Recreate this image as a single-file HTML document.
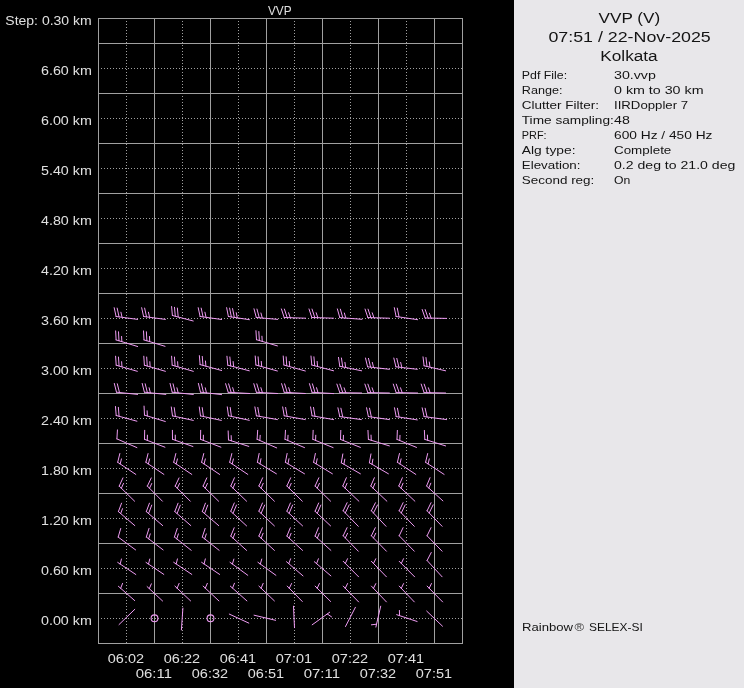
<!DOCTYPE html><html><head><meta charset="utf-8"><style>html,body{margin:0;padding:0;background:#000;width:744px;height:688px;overflow:hidden}</style></head><body><svg width="744" height="688" viewBox="0 0 744 688" style="display:block"><rect x="0" y="0" width="744" height="688" fill="#000"/><g stroke="#a0a0a0" stroke-width="1" shape-rendering="crispEdges"><line x1="98" y1="43.5" x2="463" y2="43.5"/><line x1="98" y1="93.5" x2="463" y2="93.5"/><line x1="98" y1="143.5" x2="463" y2="143.5"/><line x1="98" y1="193.5" x2="463" y2="193.5"/><line x1="98" y1="243.5" x2="463" y2="243.5"/><line x1="98" y1="293.5" x2="463" y2="293.5"/><line x1="98" y1="343.5" x2="463" y2="343.5"/><line x1="98" y1="393.5" x2="463" y2="393.5"/><line x1="98" y1="443.5" x2="463" y2="443.5"/><line x1="98" y1="493.5" x2="463" y2="493.5"/><line x1="98" y1="543.5" x2="463" y2="543.5"/><line x1="98" y1="593.5" x2="463" y2="593.5"/><line x1="154.5" y1="18" x2="154.5" y2="644"/><line x1="210.5" y1="18" x2="210.5" y2="644"/><line x1="266.5" y1="18" x2="266.5" y2="644"/><line x1="322.5" y1="18" x2="322.5" y2="644"/><line x1="378.5" y1="18" x2="378.5" y2="644"/><line x1="434.5" y1="18" x2="434.5" y2="644"/><rect x="98.5" y="18.5" width="364" height="625" fill="none"/></g><g stroke="#a0a0a0" stroke-width="1" stroke-dasharray="1 2" shape-rendering="crispEdges"><line x1="101" y1="68.5" x2="462" y2="68.5"/><line x1="101" y1="118.5" x2="462" y2="118.5"/><line x1="101" y1="168.5" x2="462" y2="168.5"/><line x1="101" y1="218.5" x2="462" y2="218.5"/><line x1="101" y1="268.5" x2="462" y2="268.5"/><line x1="101" y1="318.5" x2="462" y2="318.5"/><line x1="101" y1="368.5" x2="462" y2="368.5"/><line x1="101" y1="418.5" x2="462" y2="418.5"/><line x1="101" y1="468.5" x2="462" y2="468.5"/><line x1="101" y1="518.5" x2="462" y2="518.5"/><line x1="101" y1="568.5" x2="462" y2="568.5"/><line x1="101" y1="618.5" x2="462" y2="618.5"/><line x1="126.5" y1="21" x2="126.5" y2="643"/><line x1="182.5" y1="21" x2="182.5" y2="643"/><line x1="238.5" y1="21" x2="238.5" y2="643"/><line x1="294.5" y1="21" x2="294.5" y2="643"/><line x1="350.5" y1="21" x2="350.5" y2="643"/><line x1="406.5" y1="21" x2="406.5" y2="643"/></g><g font-family="Liberation Sans, sans-serif" style="filter:grayscale(1)"><text x="5.3" y="25.3" font-size="12.5" fill="#e0e0e0" text-anchor="start" textLength="86.4" lengthAdjust="spacingAndGlyphs">Step: 0.30 km</text><text x="91.8" y="75.3" font-size="12.5" fill="#e0e0e0" text-anchor="end" textLength="50.8" lengthAdjust="spacingAndGlyphs">6.60 km</text><text x="91.8" y="125.3" font-size="12.5" fill="#e0e0e0" text-anchor="end" textLength="50.8" lengthAdjust="spacingAndGlyphs">6.00 km</text><text x="91.8" y="175.3" font-size="12.5" fill="#e0e0e0" text-anchor="end" textLength="50.8" lengthAdjust="spacingAndGlyphs">5.40 km</text><text x="91.8" y="225.3" font-size="12.5" fill="#e0e0e0" text-anchor="end" textLength="50.8" lengthAdjust="spacingAndGlyphs">4.80 km</text><text x="91.8" y="275.3" font-size="12.5" fill="#e0e0e0" text-anchor="end" textLength="50.8" lengthAdjust="spacingAndGlyphs">4.20 km</text><text x="91.8" y="325.3" font-size="12.5" fill="#e0e0e0" text-anchor="end" textLength="50.8" lengthAdjust="spacingAndGlyphs">3.60 km</text><text x="91.8" y="375.3" font-size="12.5" fill="#e0e0e0" text-anchor="end" textLength="50.8" lengthAdjust="spacingAndGlyphs">3.00 km</text><text x="91.8" y="425.3" font-size="12.5" fill="#e0e0e0" text-anchor="end" textLength="50.8" lengthAdjust="spacingAndGlyphs">2.40 km</text><text x="91.8" y="475.3" font-size="12.5" fill="#e0e0e0" text-anchor="end" textLength="50.8" lengthAdjust="spacingAndGlyphs">1.80 km</text><text x="91.8" y="525.3" font-size="12.5" fill="#e0e0e0" text-anchor="end" textLength="50.8" lengthAdjust="spacingAndGlyphs">1.20 km</text><text x="91.8" y="575.3" font-size="12.5" fill="#e0e0e0" text-anchor="end" textLength="50.8" lengthAdjust="spacingAndGlyphs">0.60 km</text><text x="91.8" y="625.3" font-size="12.5" fill="#e0e0e0" text-anchor="end" textLength="50.8" lengthAdjust="spacingAndGlyphs">0.00 km</text><text x="268" y="15" font-size="12.5" fill="#e0e0e0" text-anchor="start" textLength="23.6" lengthAdjust="spacingAndGlyphs">VVP</text><text x="107.8" y="663.2" font-size="12.5" fill="#e0e0e0" text-anchor="start" textLength="36.2" lengthAdjust="spacingAndGlyphs">06:02</text><text x="163.79999999999998" y="663.2" font-size="12.5" fill="#e0e0e0" text-anchor="start" textLength="36.2" lengthAdjust="spacingAndGlyphs">06:22</text><text x="219.79999999999998" y="663.2" font-size="12.5" fill="#e0e0e0" text-anchor="start" textLength="36.2" lengthAdjust="spacingAndGlyphs">06:41</text><text x="275.8" y="663.2" font-size="12.5" fill="#e0e0e0" text-anchor="start" textLength="36.2" lengthAdjust="spacingAndGlyphs">07:01</text><text x="331.8" y="663.2" font-size="12.5" fill="#e0e0e0" text-anchor="start" textLength="36.2" lengthAdjust="spacingAndGlyphs">07:22</text><text x="387.8" y="663.2" font-size="12.5" fill="#e0e0e0" text-anchor="start" textLength="36.2" lengthAdjust="spacingAndGlyphs">07:41</text><text x="135.79999999999998" y="678.2" font-size="12.5" fill="#e0e0e0" text-anchor="start" textLength="36.2" lengthAdjust="spacingAndGlyphs">06:11</text><text x="191.79999999999998" y="678.2" font-size="12.5" fill="#e0e0e0" text-anchor="start" textLength="36.2" lengthAdjust="spacingAndGlyphs">06:32</text><text x="247.8" y="678.2" font-size="12.5" fill="#e0e0e0" text-anchor="start" textLength="36.2" lengthAdjust="spacingAndGlyphs">06:51</text><text x="303.8" y="678.2" font-size="12.5" fill="#e0e0e0" text-anchor="start" textLength="36.2" lengthAdjust="spacingAndGlyphs">07:11</text><text x="359.8" y="678.2" font-size="12.5" fill="#e0e0e0" text-anchor="start" textLength="36.2" lengthAdjust="spacingAndGlyphs">07:32</text><text x="415.8" y="678.2" font-size="12.5" fill="#e0e0e0" text-anchor="start" textLength="36.2" lengthAdjust="spacingAndGlyphs">07:51</text></g><rect x="514" y="0" width="230" height="688" fill="#e8e7ea"/><g font-family="Liberation Sans, sans-serif" style="filter:grayscale(1)"><text x="598.6" y="22.6" font-size="15.5" fill="#141414" text-anchor="start" textLength="61.6" lengthAdjust="spacingAndGlyphs">VVP (V)</text><text x="548.4" y="41.6" font-size="15.5" fill="#141414" text-anchor="start" textLength="162.4" lengthAdjust="spacingAndGlyphs">07:51 / 22-Nov-2025</text><text x="600.3" y="60.6" font-size="15.5" fill="#141414" text-anchor="start" textLength="57.4" lengthAdjust="spacingAndGlyphs">Kolkata</text><text x="521.8" y="78.6" font-size="11.5" fill="#141414" text-anchor="start" textLength="45.3" lengthAdjust="spacingAndGlyphs">Pdf File:</text><text x="614.0" y="78.6" font-size="11.5" fill="#141414" text-anchor="start" textLength="41.89999999999998" lengthAdjust="spacingAndGlyphs">30.vvp</text><text x="521.8" y="93.6" font-size="11.5" fill="#141414" text-anchor="start" textLength="40.699999999999996" lengthAdjust="spacingAndGlyphs">Range:</text><text x="614.0" y="93.6" font-size="11.5" fill="#141414" text-anchor="start" textLength="89.5" lengthAdjust="spacingAndGlyphs">0 km to 30 km</text><text x="521.8" y="108.6" font-size="11.5" fill="#141414" text-anchor="start" textLength="77.2" lengthAdjust="spacingAndGlyphs">Clutter Filter:</text><text x="614.0" y="108.6" font-size="11.5" fill="#141414" text-anchor="start" textLength="74.10000000000002" lengthAdjust="spacingAndGlyphs">IIRDoppler 7</text><text x="521.8" y="123.6" font-size="11.5" fill="#141414" text-anchor="start" textLength="92.0" lengthAdjust="spacingAndGlyphs">Time sampling:</text><text x="614.0" y="123.6" font-size="11.5" fill="#141414" text-anchor="start" textLength="15.799999999999955" lengthAdjust="spacingAndGlyphs">48</text><text x="521.8" y="138.6" font-size="11.5" fill="#141414" text-anchor="start" textLength="24.8" lengthAdjust="spacingAndGlyphs">PRF:</text><text x="614.0" y="138.6" font-size="11.5" fill="#141414" text-anchor="start" textLength="98.5" lengthAdjust="spacingAndGlyphs">600 Hz / 450 Hz</text><text x="521.8" y="153.6" font-size="11.5" fill="#141414" text-anchor="start" textLength="53.699999999999996" lengthAdjust="spacingAndGlyphs">Alg type:</text><text x="614.0" y="153.6" font-size="11.5" fill="#141414" text-anchor="start" textLength="57.299999999999955" lengthAdjust="spacingAndGlyphs">Complete</text><text x="521.8" y="168.6" font-size="11.5" fill="#141414" text-anchor="start" textLength="58.699999999999996" lengthAdjust="spacingAndGlyphs">Elevation:</text><text x="614.0" y="168.6" font-size="11.5" fill="#141414" text-anchor="start" textLength="121.29999999999995" lengthAdjust="spacingAndGlyphs">0.2 deg to 21.0 deg</text><text x="521.8" y="183.6" font-size="11.5" fill="#141414" text-anchor="start" textLength="72.5" lengthAdjust="spacingAndGlyphs">Second reg:</text><text x="614.0" y="183.6" font-size="11.5" fill="#141414" text-anchor="start" textLength="16.299999999999955" lengthAdjust="spacingAndGlyphs">On</text><text x="522" y="630.6" font-size="11.5" fill="#141414" text-anchor="start" textLength="51.0" lengthAdjust="spacingAndGlyphs">Rainbow</text><text x="574.6" y="630.8" font-size="11.5" fill="#404040" text-anchor="start" textLength="9.6" lengthAdjust="spacingAndGlyphs">®</text><text x="589.0" y="630.6" font-size="11.5" fill="#141414" text-anchor="start" textLength="53.8" lengthAdjust="spacingAndGlyphs">SELEX-SI</text></g><path d="M116.10 316.50L137.60 319.40M116.10 316.50l-1.92 -8.79M119.07 316.90l-1.92 -8.79M122.05 317.30l-1.11 -5.08M143.60 316.50L165.40 319.40M143.60 316.50l-1.94 -8.79M146.57 316.90l-1.94 -8.79M149.55 317.29l-1.12 -5.08M172.40 315.50L193.20 321.00M172.40 315.50l-0.81 -8.96M175.30 316.27l-0.81 -8.96M178.20 317.03l-0.81 -8.96M200.10 316.50L221.60 319.50M200.10 316.50l-1.88 -8.80M203.07 316.91l-1.88 -8.80M206.04 317.33l-1.09 -5.09M228.40 316.50L249.40 319.70M228.40 316.50l-1.77 -8.82M231.37 316.95l-1.77 -8.82M234.33 317.40l-1.77 -8.82M237.30 317.86l-1.02 -5.10M256.30 317.50L277.70 319.40M256.30 317.50l-2.32 -8.70M259.29 317.77l-2.32 -8.70M262.28 318.03l-1.34 -5.02M284.20 317.50L305.60 318.20M284.20 317.50l-2.80 -8.55M287.20 317.60l-2.80 -8.55M290.20 317.70l-1.62 -4.94M311.80 317.50L333.50 318.20M311.80 317.50l-2.80 -8.55M314.80 317.60l-2.80 -8.55M317.80 317.69l-1.62 -4.94M339.80 317.60L361.90 319.30M339.80 317.60l-2.42 -8.67M342.79 317.83l-2.42 -8.67M345.78 318.06l-1.40 -5.01M367.90 317.60L389.40 318.20M367.90 317.60l-2.84 -8.54M370.90 317.68l-2.84 -8.54M373.90 317.77l-1.64 -4.93M396.10 316.50L417.60 319.70M396.10 316.50l-1.80 -8.82M399.07 316.94l-1.80 -8.82M425.10 318.00L446.60 318.40M425.10 318.00l-2.92 -8.51M428.10 318.06l-2.92 -8.51M431.10 318.11l-1.69 -4.92M116.10 339.90L137.60 346.50M116.10 339.90l-0.46 -8.99M118.97 340.78l-0.46 -8.99M121.84 341.66l-0.27 -5.19M144.00 339.90L165.00 346.30M144.00 339.90l-0.48 -8.99M146.87 340.77l-0.48 -8.99M149.74 341.65l-0.28 -5.19M256.50 339.70L277.40 345.90M256.50 339.70l-0.55 -8.98M259.38 340.55l-0.55 -8.98M262.25 341.41l-0.32 -5.19M116.20 365.20L137.30 371.30M116.20 365.20l-0.61 -8.98M119.08 366.03l-0.61 -8.98M121.96 366.87l-0.35 -5.19M144.40 365.20L165.40 371.30M144.40 365.20l-0.60 -8.98M147.28 366.04l-0.60 -8.98M150.16 366.87l-0.34 -5.19M172.20 365.20L193.30 371.30M172.20 365.20l-0.61 -8.98M175.08 366.03l-0.61 -8.98M177.96 366.87l-0.35 -5.19M200.10 364.60L221.60 370.50M200.10 364.60l-0.73 -8.97M202.99 365.39l-0.73 -8.97M205.89 366.19l-0.42 -5.18M227.80 365.20L249.30 370.80M227.80 365.20l-0.85 -8.96M230.70 365.96l-0.85 -8.96M233.61 366.71l-0.49 -5.18M255.90 365.00L277.40 371.00M255.90 365.00l-0.69 -8.97M258.79 365.81l-0.69 -8.97M261.68 366.61l-0.40 -5.18M283.90 365.00L305.30 371.00M283.90 365.00l-0.68 -8.97M286.79 365.81l-0.68 -8.97M289.68 366.62l-0.39 -5.19M311.80 365.00L333.60 370.80M311.80 365.00l-0.80 -8.96M314.70 365.77l-0.80 -8.96M317.60 366.54l-0.46 -5.18M339.80 366.30L361.60 370.80M339.80 366.30l-1.30 -8.90M342.74 366.91l-1.30 -8.90M345.68 367.51l-0.75 -5.15M367.60 366.80L389.40 369.30M367.60 366.80l-2.09 -8.75M370.58 367.14l-2.09 -8.75M373.56 367.48l-1.21 -5.06M395.90 366.80L417.30 369.30M395.90 366.80l-2.08 -8.76M398.88 367.15l-2.08 -8.76M401.86 367.50l-1.20 -5.06M424.10 365.80L445.60 370.80M424.10 365.80l-1.08 -8.93M427.02 366.48l-1.08 -8.93M429.94 367.16l-0.63 -5.16M116.50 392.20L137.60 394.40M116.50 392.20l-2.18 -8.73M119.48 392.51l-2.18 -8.73M144.40 392.20L165.80 394.40M144.40 392.20l-2.20 -8.73M147.38 392.51l-2.20 -8.73M150.37 392.81l-1.27 -5.04M172.20 392.20L193.30 394.50M172.20 392.20l-2.14 -8.74M175.18 392.53l-2.14 -8.74M178.16 392.85l-1.24 -5.05M200.50 392.20L221.60 394.60M200.50 392.20l-2.10 -8.75M203.48 392.54l-2.10 -8.75M206.46 392.88l-1.21 -5.06M228.20 392.30L249.60 393.50M228.20 392.30l-2.60 -8.62M231.20 392.47l-2.60 -8.62M234.19 392.64l-1.50 -4.98M256.40 392.30L277.50 393.50M256.40 392.30l-2.59 -8.62M259.40 392.47l-2.59 -8.62M262.39 392.64l-1.50 -4.98M284.20 392.30L305.30 393.50M284.20 392.30l-2.59 -8.62M287.20 392.47l-2.59 -8.62M290.19 392.64l-1.50 -4.98M312.00 392.30L333.60 393.60M312.00 392.30l-2.56 -8.63M314.99 392.48l-2.56 -8.63M317.99 392.66l-1.48 -4.98M339.80 392.60L361.60 393.00M339.80 392.60l-2.92 -8.51M342.80 392.66l-2.92 -8.51M345.80 392.71l-1.69 -4.92M367.80 392.60L389.40 393.00M367.80 392.60l-2.92 -8.51M370.80 392.66l-2.92 -8.51M373.80 392.71l-1.69 -4.92M396.20 392.60L417.60 393.00M396.20 392.60l-2.92 -8.51M399.20 392.66l-2.92 -8.51M402.20 392.71l-1.69 -4.92M424.10 392.60L445.60 393.00M424.10 392.60l-2.92 -8.51M427.10 392.66l-2.92 -8.51M430.10 392.71l-1.69 -4.92M116.20 415.50L136.90 421.20M116.20 415.50l-0.72 -8.97M119.09 416.30l-0.72 -8.97M144.50 415.10L165.30 421.50M144.50 415.10l-0.45 -8.99M147.37 415.98l-0.26 -5.19M172.50 415.90L193.30 420.40M172.50 415.90l-1.22 -8.92M175.43 416.53l-1.22 -8.92M200.50 415.90L221.30 420.40M200.50 415.90l-1.22 -8.92M203.43 416.53l-1.22 -8.92M228.50 415.80L249.30 420.30M228.50 415.80l-1.22 -8.92M231.43 416.43l-1.22 -8.92M256.40 415.80L277.40 419.60M256.40 415.80l-1.52 -8.87M259.35 416.33l-1.52 -8.87M284.20 415.80L305.30 419.60M284.20 415.80l-1.53 -8.87M287.15 416.33l-1.53 -8.87M312.10 415.80L333.60 419.60M312.10 415.80l-1.56 -8.86M315.05 416.32l-1.56 -8.86M339.80 416.60L361.30 419.60M339.80 416.60l-1.88 -8.80M342.77 417.01l-1.88 -8.80M368.40 416.60L389.40 419.60M368.40 416.60l-1.85 -8.81M371.37 417.02l-1.85 -8.81M396.20 416.60L417.30 419.90M396.20 416.60l-1.73 -8.83M399.16 417.06l-1.73 -8.83M424.10 416.60L446.60 419.60M424.10 416.60l-1.93 -8.79M427.07 417.00l-1.93 -8.79M116.90 438.90L136.90 447.60M116.90 438.90l0.55 -8.98M144.50 439.30L164.90 447.20M144.50 439.30l0.18 -9.00M147.30 440.38l0.11 -5.20M172.50 439.30L192.90 446.50M172.50 439.30l-0.09 -9.00M175.33 440.30l-0.05 -5.20M200.50 439.30L220.90 447.20M200.50 439.30l0.18 -9.00M203.30 440.38l0.11 -5.20M228.50 439.90L248.80 446.40M228.50 439.90l-0.35 -8.99M231.36 440.81l-0.20 -5.20M257.10 439.30L276.70 447.90M257.10 439.30l0.58 -8.98M259.85 440.51l0.33 -5.19M285.00 439.30L304.50 447.60M285.00 439.30l0.48 -8.99M287.76 440.47l0.28 -5.19M312.80 439.30L333.10 447.60M312.80 439.30l0.35 -8.99M315.58 440.44l0.20 -5.20M340.50 439.40L360.40 447.40M340.50 439.40l0.30 -9.00M343.28 440.52l0.17 -5.20M368.40 439.40L389.40 445.90M368.40 439.40l-0.44 -8.99M371.27 440.29l-0.25 -5.19M397.00 439.40L416.50 447.40M397.00 439.40l0.36 -8.99M399.78 440.54l0.21 -5.20M424.80 439.40L445.60 445.90M424.80 439.40l-0.42 -8.99M427.66 440.29l-0.24 -5.19M117.70 462.30L135.80 474.40M117.70 462.30l2.14 -8.74M120.19 463.97l1.24 -5.05M145.90 462.30L163.90 474.40M145.90 462.30l2.16 -8.74M148.39 463.97l1.25 -5.05M173.70 462.30L191.80 474.40M173.70 462.30l2.14 -8.74M176.19 463.97l1.24 -5.05M201.60 462.30L219.60 474.40M201.60 462.30l2.16 -8.74M204.09 463.97l1.25 -5.05M229.70 462.30L247.80 474.40M229.70 462.30l2.14 -8.74M232.19 463.97l1.24 -5.05M257.40 462.30L276.40 473.80M257.40 462.30l1.75 -8.83M259.97 463.85l1.01 -5.10M285.40 462.30L304.50 473.80M285.40 462.30l1.73 -8.83M287.97 463.85l1.00 -5.10M313.60 462.30L332.40 473.80M313.60 462.30l1.79 -8.82M316.16 463.87l1.03 -5.10M341.30 462.80L360.40 473.80M341.30 462.80l1.55 -8.86M343.90 464.30l0.90 -5.12M369.40 462.80L388.40 473.80M369.40 462.80l1.57 -8.86M372.00 464.30l0.91 -5.12M397.40 462.30L415.80 474.40M397.40 462.30l2.07 -8.76M399.91 463.95l1.20 -5.06M425.60 462.30L444.10 474.40M425.60 462.30l2.05 -8.76M428.11 463.94l1.19 -5.06M119.20 486.10L134.60 501.20M119.20 486.10l3.72 -8.19M121.34 488.20l2.15 -4.73M147.40 486.10L162.40 501.20M147.40 486.10l3.83 -8.14M149.51 488.23l2.21 -4.71M175.20 486.10L190.30 501.20M175.20 486.10l3.80 -8.16M177.32 488.22l2.20 -4.71M203.10 486.10L218.60 501.20M203.10 486.10l3.70 -8.21M205.25 488.19l2.14 -4.74M230.80 486.00L246.60 501.20M230.80 486.00l3.65 -8.23M232.96 488.08l2.11 -4.75M258.90 486.00L274.40 501.20M258.90 486.00l3.72 -8.19M261.04 488.10l2.15 -4.73M286.90 486.00L302.30 501.20M286.90 486.00l3.75 -8.18M289.04 488.11l2.17 -4.73M315.10 486.00L330.60 501.20M315.10 486.00l3.72 -8.19M317.24 488.10l2.15 -4.73M342.80 486.00L358.90 501.20M342.80 486.00l3.57 -8.26M344.98 488.06l2.06 -4.77M370.80 486.00L386.90 501.20M370.80 486.00l3.57 -8.26M372.98 488.06l2.06 -4.77M398.80 486.00L414.90 501.20M398.80 486.00l3.57 -8.26M400.98 488.06l2.06 -4.77M426.60 486.00L442.90 500.90M426.60 486.00l3.43 -8.32M428.81 488.02l1.98 -4.81M118.40 511.60L134.80 525.60M118.40 511.60l3.15 -8.43M120.68 513.55l1.82 -4.87M146.30 511.60L162.70 525.60M146.30 511.60l3.15 -8.43M148.58 513.55l3.15 -8.43M174.80 511.60L190.80 525.60M174.80 511.60l3.25 -8.39M177.06 513.58l3.25 -8.39M202.30 511.60L218.70 525.60M202.30 511.60l3.15 -8.43M204.58 513.55l3.15 -8.43M230.80 511.30L246.60 525.90M230.80 511.30l3.48 -8.30M233.00 513.34l3.48 -8.30M258.90 511.30L274.40 525.90M258.90 511.30l3.56 -8.27M261.08 513.36l3.56 -8.27M286.90 511.30L302.60 525.90M286.90 511.30l3.51 -8.29M289.10 513.34l3.51 -8.29M315.10 511.30L330.60 525.90M315.10 511.30l3.56 -8.27M317.28 513.36l3.56 -8.27M343.20 510.80L358.30 526.30M343.20 510.80l3.91 -8.11M345.29 512.95l3.91 -8.11M371.40 510.80L386.00 526.30M371.40 510.80l4.05 -8.04M373.46 512.98l4.05 -8.04M399.20 510.80L414.30 526.30M399.20 510.80l3.91 -8.11M401.29 512.95l3.91 -8.11M427.10 510.80L442.10 526.30M427.10 510.80l3.94 -8.09M429.19 512.96l3.94 -8.09M118.20 537.10L135.60 549.90M118.20 537.10l2.53 -8.64M146.30 537.00L163.10 549.90M146.30 537.00l2.71 -8.58M148.68 538.83l1.57 -4.96M174.40 537.00L191.20 550.30M174.40 537.00l2.84 -8.54M176.75 538.86l1.64 -4.94M202.30 537.00L219.10 550.30M202.30 537.00l2.84 -8.54M204.65 538.86l1.64 -4.94M230.80 536.10L246.60 550.40M230.80 536.10l3.39 -8.34M233.02 538.11l1.96 -4.82M258.90 536.10L274.40 550.40M258.90 536.10l3.47 -8.30M261.10 538.13l2.01 -4.80M286.90 536.10L302.60 550.40M286.90 536.10l3.42 -8.33M289.12 538.12l1.98 -4.81M315.10 536.10L330.90 550.40M315.10 536.10l3.39 -8.34M317.32 538.11l1.96 -4.82M343.20 535.80L358.30 551.20M343.20 535.80l3.88 -8.12M345.30 537.94l2.24 -4.69M371.40 535.80L386.40 551.20M371.40 535.80l3.91 -8.11M373.49 537.95l2.26 -4.68M399.20 535.80L414.30 551.20M399.20 535.80l3.88 -8.12M427.10 535.80L442.10 551.20M427.10 535.80l3.91 -8.11M117.70 562.40L135.80 574.50M120.19 564.07l1.24 -5.05M146.00 562.40L163.80 574.40M148.49 564.08l1.26 -5.05M173.70 562.30L191.80 574.40M176.19 563.97l1.24 -5.05M201.60 562.30L219.60 574.40M204.09 563.97l1.25 -5.05M230.00 562.30L247.80 575.30M232.42 564.07l1.45 -4.99M257.90 562.30L275.90 575.30M260.33 564.06l1.42 -5.00M286.50 561.70L303.00 575.90M288.77 563.66l1.84 -4.86M314.30 561.70L330.90 575.90M316.58 563.65l1.82 -4.87M343.20 561.30L358.60 576.80M345.31 563.43l2.21 -4.71M371.40 561.30L386.40 576.80M373.49 563.46l2.27 -4.68M399.20 561.30L414.60 576.80M401.31 563.43l2.21 -4.71M427.10 560.50L442.10 576.80M427.10 560.50l4.14 -7.99M118.40 586.30L134.70 600.60M120.66 588.28l1.89 -4.85M147.10 586.60L162.60 601.00M149.30 588.64l2.02 -4.79M174.90 586.10L190.60 600.90M177.08 588.16l2.06 -4.78M203.10 586.10L218.90 600.90M205.29 588.15l2.04 -4.78M230.30 586.10L246.90 600.90M232.54 588.10l1.92 -4.83M258.90 586.10L274.40 600.90M261.07 588.17l2.09 -4.76M287.20 586.10L302.30 601.50M289.30 588.24l2.24 -4.69M315.10 586.10L330.60 601.50M317.23 588.21l2.18 -4.72M343.20 586.10L358.60 601.90M345.29 588.25l2.26 -4.68M371.40 586.10L386.40 601.90M373.47 588.28l2.32 -4.65M399.20 586.10L414.30 601.90M401.27 588.27l2.30 -4.66M427.10 586.10L442.60 601.90M429.20 588.24l2.24 -4.69M134.80 609.30L119.00 624.60M182.90 608.10L181.40 629.90M229.30 614.10L248.80 623.10M254.10 615.20L275.60 620.30M293.50 606.20L294.50 627.70M329.70 612.20L312.20 624.80M327.27 613.95l4.30 2.93M355.40 607.30L345.50 626.50M375.90 627.10L380.70 606.20M376.57 624.18l-5.16 0.64M396.70 614.70L417.10 621.50M399.55 615.65l-0.14 -5.20M426.70 611.10L442.50 626.20" fill="none" stroke="#ee9cf2" stroke-width="1" stroke-linecap="round" stroke-linejoin="round"/><g fill="none" stroke="#ee9cf2" stroke-width="1.1"><circle cx="154.5" cy="618.3" r="3.4"/><circle cx="210.5" cy="618.3" r="3.4"/></g></svg></body></html>
